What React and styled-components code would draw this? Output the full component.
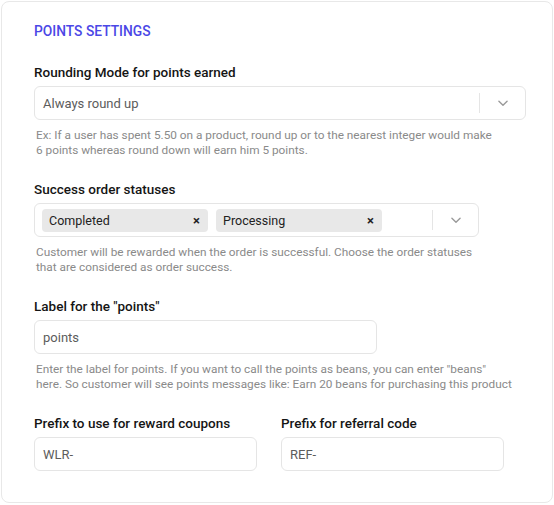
import React from "react"
import styled, { createGlobalStyle } from "styled-components"

const GlobalStyle = createGlobalStyle`
  html, body {
    margin: 0;
    padding: 0;
    background: #ffffff;
    font-family: Roboto, "Liberation Sans", Arial, sans-serif;
  }
  * { box-sizing: border-box; }
`

const Page = styled.div`
  padding: 1px;
`

const Card = styled.div`
  width: 552px;
  height: 502px;
  border: 1px solid #e8e8e8;
  border-radius: 8px;
  background: #ffffff;
  padding: 20px 26px 0 32px;
  display: flex;
  flex-direction: column;
`

const Title = styled.h2`
  margin: 0 0 23px;
  font-size: 13.8px;
  line-height: 18px;
  font-weight: 500;
  color: #4b47e6;
`

const Fields = styled.div`
  display: flex;
  flex-direction: column;
  gap: 22px;
`

const Field = styled.div`
  display: flex;
  flex-direction: column;
  width: ${p => p.$width || "auto"};
`

const Row = styled.div`
  display: flex;
  gap: 24px;
`

const Label = styled.label`
  font-size: 13.5px;
  line-height: 18px;
  font-weight: 500;
  color: #151515;
  margin-bottom: 5px;
`

const Help = styled.p`
  margin: 8px 0 0;
  font-size: 11.8px;
  line-height: 15px;
  color: #8a8a8a;
  padding-left: 2px;
`

const Control = styled.div`
  height: 34px;
  width: ${p => p.$width};
  border: 1px solid #e5e5e5;
  border-radius: 6px;
  background: #fff;
  display: flex;
  align-items: center;
`

const Value = styled.div`
  flex: 1;
  padding-left: 8px;
  font-size: 13px;
  color: #5c5c5c;
`

const Chips = styled.div`
  flex: 1;
  display: flex;
  gap: 8px;
  padding-left: 7px;
`

const Chip = styled.div`
  width: 166px;
  height: 23px;
  border-radius: 4px;
  background: #e8e8e8;
  display: flex;
  align-items: center;
  justify-content: space-between;
  padding: 0 8px 0 7px;
  font-size: 12.5px;
  color: #222;
`

const Remove = styled.span`
  font-size: 13px;
  font-weight: 700;
  color: #222;
`

const Indicator = styled.div`
  width: 46px;
  height: 20px;
  border-left: 1px solid #e5e5e5;
  display: flex;
  align-items: center;
  justify-content: center;
`

const Chevron = () => (
  <svg width="14" height="14" viewBox="0 0 24 24" fill="none" stroke="#9a9a9a" strokeWidth="2.4" strokeLinecap="round" strokeLinejoin="round">
    <path d="M5 9l7 7 7-7" />
  </svg>
)

export default function App() {
  return (
    <>
      <GlobalStyle />
      <Page>
        <Card>
          <Title>POINTS SETTINGS</Title>
          <Fields>
            <Field>
              <Label>Rounding Mode for points earned</Label>
              <Control $width="492px">
                <Value>Always round up</Value>
                <Indicator><Chevron /></Indicator>
              </Control>
              <Help>
                Ex: If a user has spent 5.50 on a product, round up or to the nearest integer would make<br />
                6 points whereas round down will earn him 5 points.
              </Help>
            </Field>
            <Field>
              <Label>Success order statuses</Label>
              <Control $width="445px">
                <Chips>
                  <Chip>Completed<Remove>×</Remove></Chip>
                  <Chip>Processing<Remove>×</Remove></Chip>
                </Chips>
                <Indicator><Chevron /></Indicator>
              </Control>
              <Help>
                Customer will be rewarded when the order is successful. Choose the order statuses<br />
                that are considered as order success.
              </Help>
            </Field>
            <Field>
              <Label>Label for the "points"</Label>
              <Control $width="343px">
                <Value>points</Value>
              </Control>
              <Help>
                Enter the label for points. If you want to call the points as beans, you can enter "beans"<br />
                here. So customer will see points messages like: Earn 20 beans for purchasing this product
              </Help>
            </Field>
            <Row>
              <Field $width="223px">
                <Label>Prefix to use for reward coupons</Label>
                <Control $width="223px">
                  <Value>WLR-</Value>
                </Control>
              </Field>
              <Field $width="223px">
                <Label>Prefix for referral code</Label>
                <Control $width="223px">
                  <Value>REF-</Value>
                </Control>
              </Field>
            </Row>
          </Fields>
        </Card>
      </Page>
    </>
  )
}
